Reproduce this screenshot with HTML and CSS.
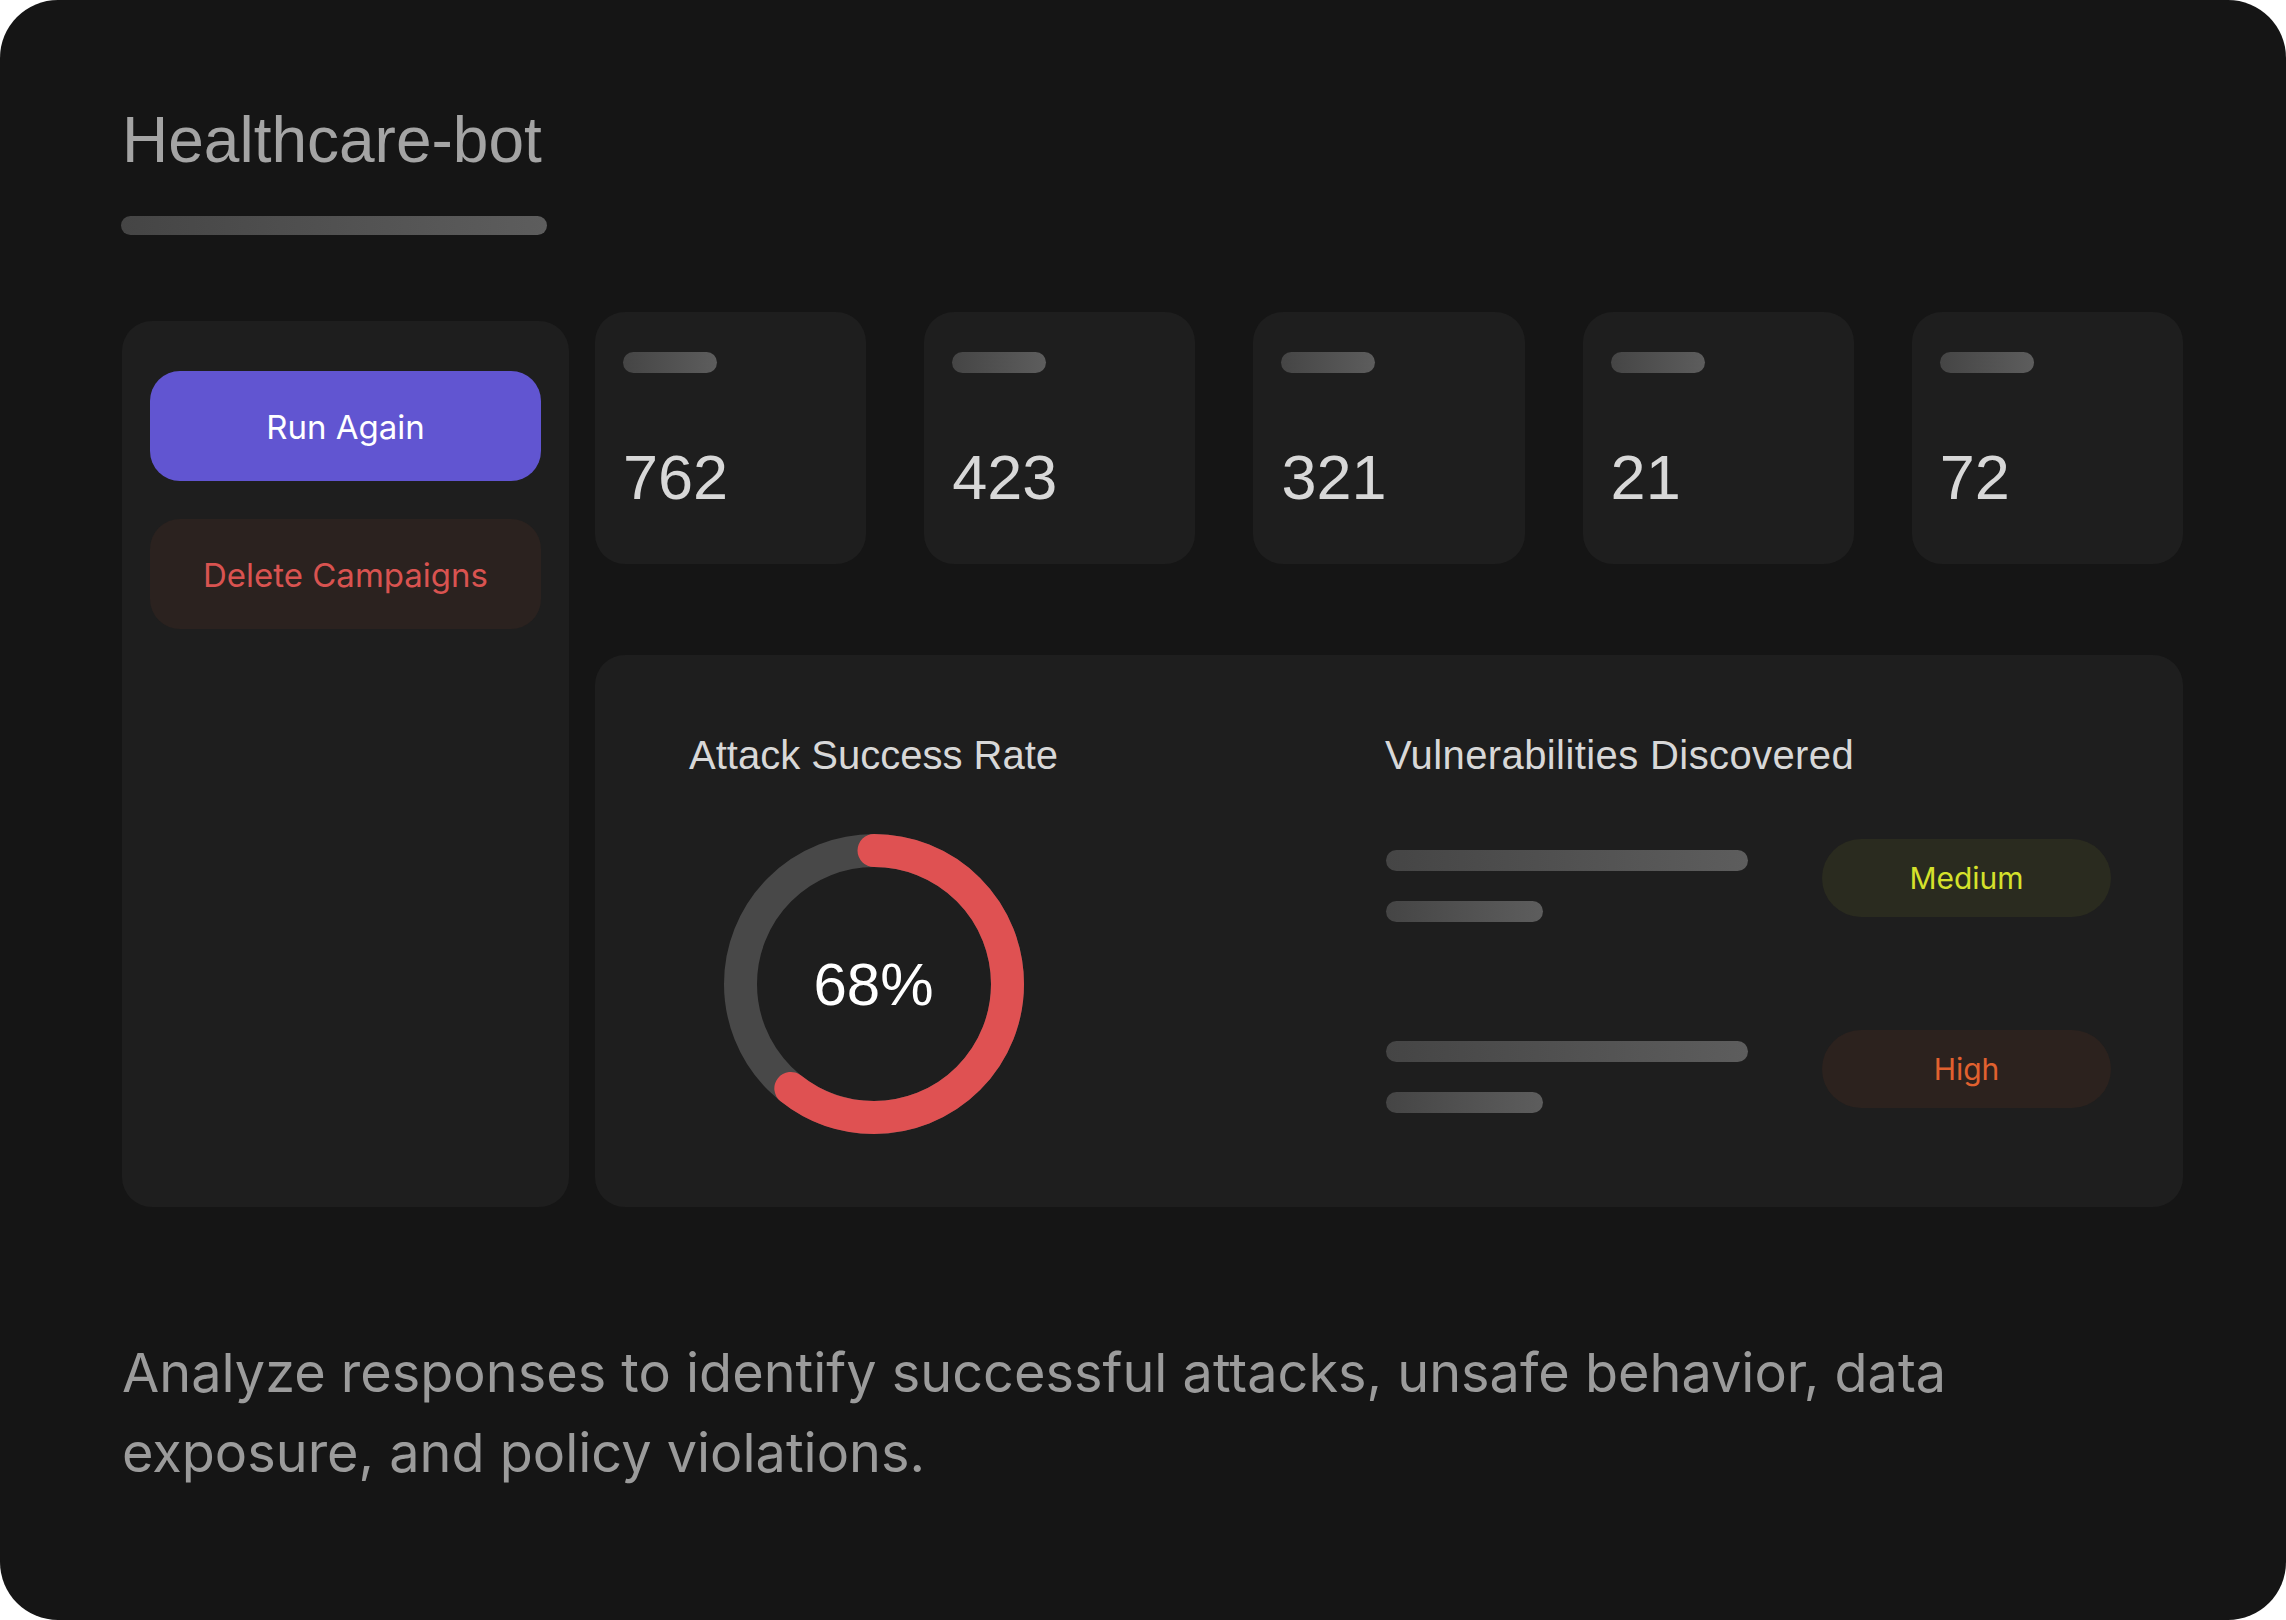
FILE: index.html
```html
<!DOCTYPE html>
<html lang="en">

<head>
    <meta charset="UTF-8" />
    <meta name="viewport" content="width=device-width, initial-scale=1.0" />
    <title>Healthcare-bot</title>
    <link rel="stylesheet" href="styles.css">
</head>

<body>
    <div class="frame">
        <h1 class="title">Healthcare-bot</h1>
        <div class="skeleton title-bar"></div>

        <div class="dashboard">
            <div class="actions">
                <button class="btn btn-primary">Run Again</button>
                <button class="btn btn-danger">Delete Campaigns</button>
            </div>

            <div class="content">
                <div class="stats">
                    <div class="stat">
                        <div class="skeleton stat-label"></div>
                        <div class="stat-value">762</div>
                    </div>
                    <div class="stat">
                        <div class="skeleton stat-label"></div>
                        <div class="stat-value">423</div>
                    </div>
                    <div class="stat">
                        <div class="skeleton stat-label"></div>
                        <div class="stat-value">321</div>
                    </div>
                    <div class="stat">
                        <div class="skeleton stat-label"></div>
                        <div class="stat-value">21</div>
                    </div>
                    <div class="stat">
                        <div class="skeleton stat-label"></div>
                        <div class="stat-value">72</div>
                    </div>
                </div>

                <div class="report">
                    <div class="rate">
                        <h2 class="report-title">Attack Success Rate</h2>
                        <div class="donut">
                            <svg viewBox="0 0 300 300" width="300" height="300">
                                <circle cx="150" cy="150" r="133.5" fill="none" stroke="#484848" stroke-width="33" />
                                <circle cx="150" cy="150" r="133.5" fill="none" stroke="#df5152" stroke-width="33"
                                    stroke-linecap="round" stroke-dasharray="509 839"
                                    transform="rotate(-90 150 150)" />
                            </svg>
                            <span class="donut-value">68%</span>
                        </div>
                    </div>

                    <div class="vulns">
                        <h2 class="report-title">Vulnerabilities Discovered</h2>
                        <div class="vuln">
                            <div class="vuln-lines">
                                <div class="skeleton line-long"></div>
                                <div class="skeleton line-short"></div>
                            </div>
                            <span class="badge badge-medium">Medium</span>
                        </div>
                        <div class="vuln">
                            <div class="vuln-lines">
                                <div class="skeleton line-long"></div>
                                <div class="skeleton line-short"></div>
                            </div>
                            <span class="badge badge-high">High</span>
                        </div>
                    </div>
                </div>
            </div>
        </div>

        <p class="summary">Analyze responses to identify successful attacks, unsafe behavior, data exposure, and policy violations.</p>
    </div>
</body>

</html>
```

FILE: styles.css
```css
:root{
    --bg: #151515;
    --panel: #1e1e1e;
    --muted: #a4a4a4;
    --light: #d8d8d8;
    --purple: #6155d1;
    --red: #df5152;
}

*{
    box-sizing: border-box;
}
body{
    margin: 0;
    background-color: #fff;
    font-family: "Liberation Sans", Arial, sans-serif;
}
.frame{
    width: 2286px;
    height: 1620px;
    background-color: var(--bg);
    border-radius: 58px;
    padding: 109px 103px 0 122px;
    overflow: hidden;
}
.title{
    margin: 0;
    font-size: 64px;
    line-height: 62px;
    font-weight: normal;
    color: var(--muted);
}

/* placeholder bars */
.skeleton{
    height: 21px;
    border-radius: 11px;
    background: linear-gradient(90deg, #454545, #5d5d5d);
}
.title-bar{
    width: 426px;
    height: 19px;
    margin-top: 45px;
    margin-left: -1px;
}

.dashboard{
    display: flex;
    gap: 26px;
    margin-top: 77px;
}
.actions{
    width: 447px;
    margin-top: 9px;
    padding: 50px 28px;
    display: flex;
    flex-direction: column;
    gap: 38px;
    background-color: var(--panel);
    border-radius: 30px;
}
.btn{
    height: 110px;
    border: none;
    border-radius: 30px;
    padding-top: 3px;
    font-family: Inter, sans-serif;
    font-size: 33px;
}
.btn-primary{
    background-color: var(--purple);
    color: #fff;
}
.btn-danger{
    background-color: #2b221f;
    color: #d95350;
}

.content{
    flex: 1;
    display: flex;
    flex-direction: column;
    gap: 91px;
}
.stats{
    display: grid;
    grid-template-columns: repeat(5, 1fr);
    gap: 58px;
}
.stat{
    height: 252px;
    padding: 40px 28px;
    background-color: var(--panel);
    border-radius: 30px;
}
.stat-label{
    width: 94px;
}
.stat-value{
    margin-top: 73px;
    font-size: 63px;
    line-height: 63px;
    color: var(--light);
}

.report{
    height: 552px;
    display: flex;
    justify-content: space-between;
    padding: 80px 72px 0 94px;
    background-color: var(--panel);
    border-radius: 30px;
}
.report-title{
    margin: 0;
    font-size: 40px;
    line-height: 40px;
    font-weight: normal;
    color: var(--light);
}
.vulns .report-title{
    letter-spacing: 0.4px;
}
.rate{
    display: flex;
    flex-direction: column;
    align-items: center;
}
.donut{
    display: grid;
    place-items: center;
    margin-top: 59px;
}
.donut svg,
.donut-value{
    grid-area: 1 / 1;
}
.donut-value{
    font-size: 60px;
    color: #fff;
}

.vulns{
    width: 726px;
}
.vuln{
    display: flex;
    justify-content: space-between;
    align-items: flex-start;
    margin-top: 64px;
}
.vuln + .vuln{
    margin-top: 108px;
}
.vuln-lines{
    display: flex;
    flex-direction: column;
    gap: 30px;
    margin-top: 11px;
    padding-left: 1px;
}
.line-long{
    width: 362px;
}
.line-short{
    width: 157px;
}
.badge{
    width: 289px;
    height: 78px;
    display: flex;
    align-items: center;
    justify-content: center;
    border-radius: 39px;
    font-family: Inter, sans-serif;
    font-size: 30px;
}
.badge-medium{
    background-color: #2a2b1f;
    color: #d5e12b;
}
.badge-high{
    background-color: #2c221e;
    color: #e1612f;
}

.summary{
    margin: 126px 0 0;
    max-width: 1920px;
    font-family: Inter, sans-serif;
    font-size: 54px;
    line-height: 80px;
    color: #9b9b9b;
}
```
